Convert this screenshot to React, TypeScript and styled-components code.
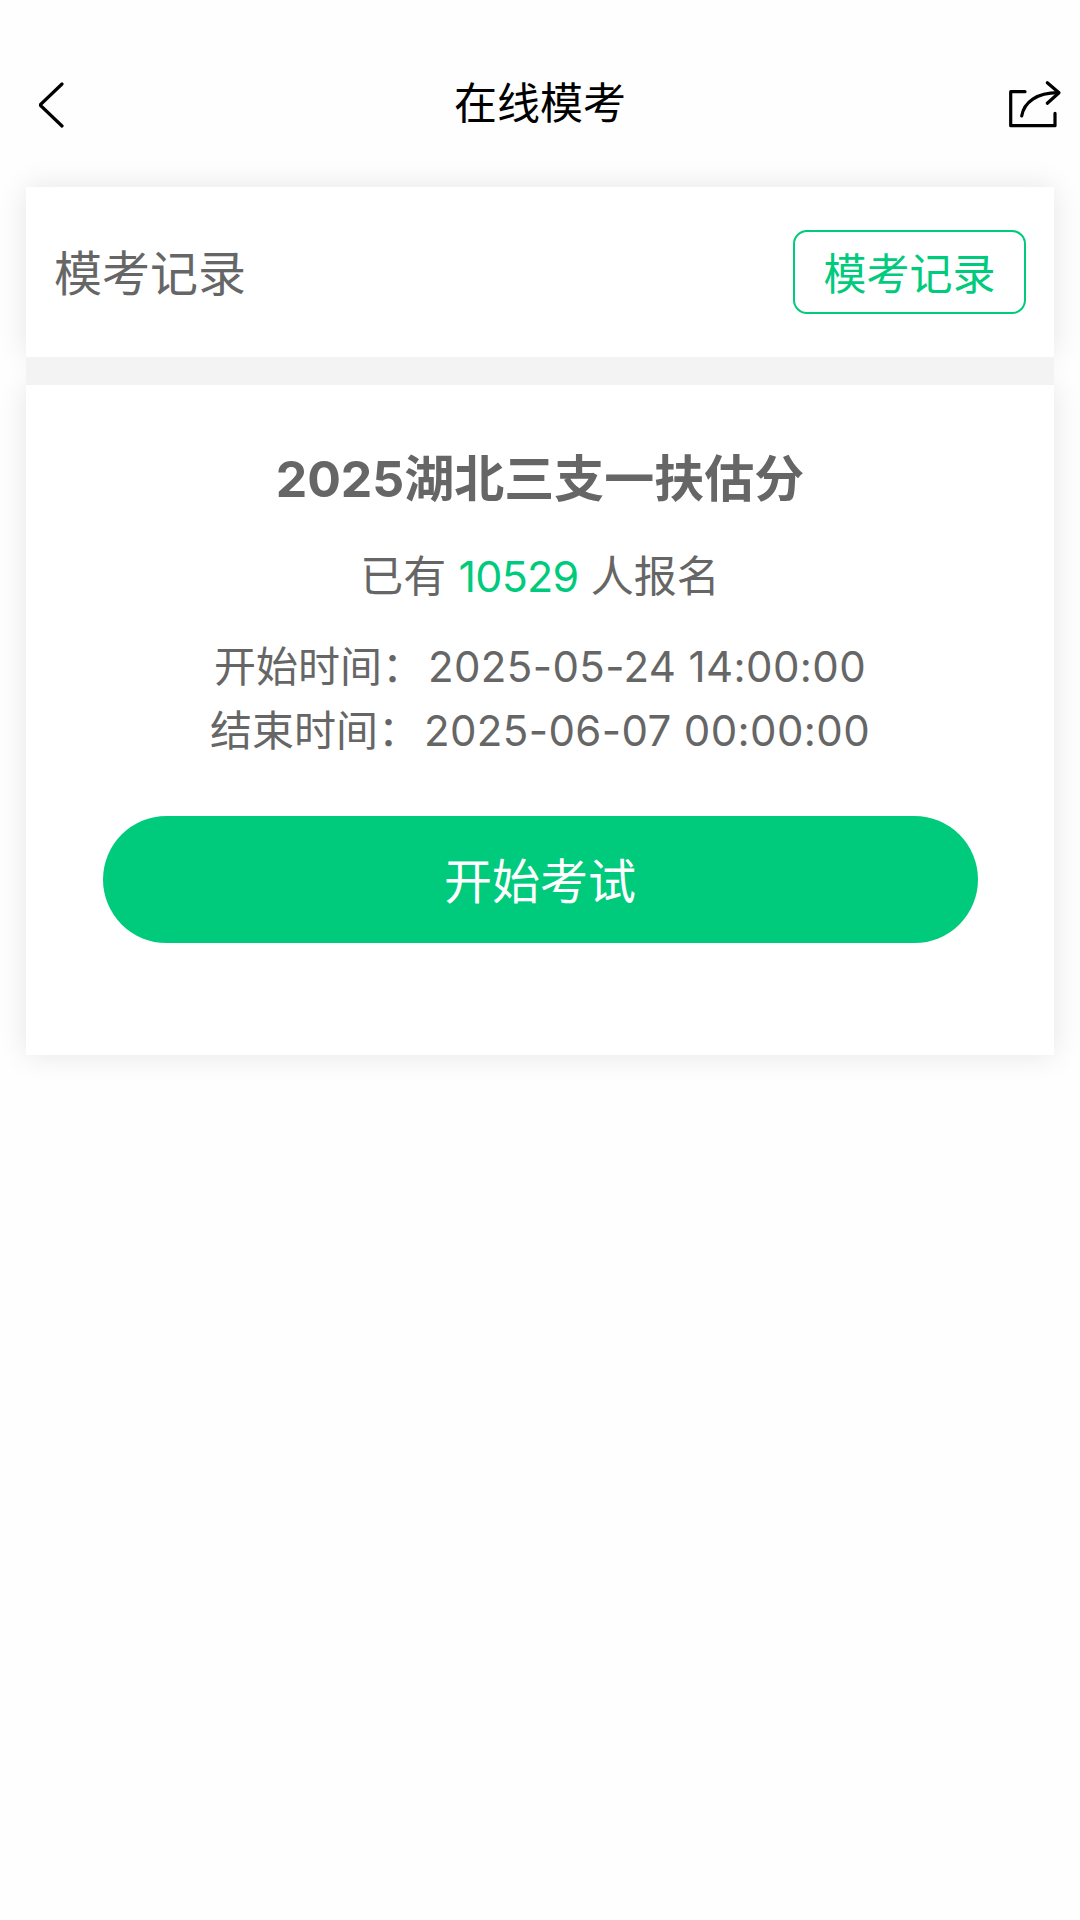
import React from 'react';
import styled, { createGlobalStyle } from 'styled-components';

const GlobalStyle = createGlobalStyle`
  html, body {
    margin: 0;
    padding: 0;
    background: #fefefe;
  }
  body {
    font-family: Inter, "Noto Sans CJK SC", sans-serif;
  }
`;

const Page = styled.div`
  width: 1080px;
  height: 1920px;
  overflow: hidden;
`;

const Header = styled.header`
  height: 187px;
  box-sizing: border-box;
  padding: 78px 15px 0;
  display: grid;
  grid-template-columns: 1fr auto 1fr;
  align-items: start;
`;

const HeaderTitle = styled.h1`
  margin: 0;
  font-size: 43px;
  font-weight: 400;
  line-height: 50px;
  color: #000;
`;

const BackButton = styled.button`
  margin-left: 24px;
  padding: 0;
  border: 0;
  background: none;
  display: block;
  justify-self: start;
`;

const ShareButton = styled.button`
  padding: 0;
  border: 0;
  background: none;
  display: block;
  justify-self: end;
`;

const Card = styled.section`
  margin: 0 26px;
  background: #fff;
  box-shadow: 0 0 28px rgba(0, 0, 0, 0.1);
`;

// sits above the two card shadows so the strip stays one flat grey
const CardGap = styled.div`
  position: relative;
  height: 28px;
  margin: 0 26px;
  background: #f3f3f3;
`;

const RecordRow = styled(Card)`
  height: 170px;
  box-sizing: border-box;
  padding: 0 28px;
  display: flex;
  align-items: center;
  justify-content: space-between;
`;

const RecordLabel = styled.div`
  margin-bottom: 4px;
  font-size: 48px;
  color: #666;
`;

const RecordButton = styled.button`
  width: 233px;
  height: 84px;
  padding: 0 0 3px;
  border: 2px solid #00cb7c;
  border-radius: 14px;
  background: #fff;
  color: #00cb7c;
  font-family: inherit;
  font-size: 43px;
`;

const ExamCard = styled(Card)`
  height: 670px;
  box-sizing: border-box;
  padding-top: 62px;
  display: flex;
  flex-direction: column;
  align-items: center;
  color: #666;
`;

const ExamTitle = styled.h2`
  margin: 0 0 35px;
  font-size: 50px;
  line-height: 64px;
  font-weight: 700;
`;

const Signup = styled.div`
  margin-bottom: 29px;
  font-size: 43px;
  line-height: 60px;
`;

const Count = styled.span`
  color: #00cb7c;
  letter-spacing: -0.7px;
`;

const TimeLine = styled.div`
  font-size: 42px;
  line-height: 64px;
  white-space: pre;
`;

const TimeValue = styled.span`
  margin-left: 4px;
  letter-spacing: 0.38px;
`;

const StartButton = styled.button`
  width: 875px;
  height: 127px;
  margin-top: 53px;
  padding: 0 0 4px;
  border: 0;
  border-radius: 64px;
  background: #00cb7c;
  color: #fff;
  font-family: inherit;
  font-size: 48px;
`;

const App = () => (
  <Page>
    <GlobalStyle />
    <Header>
      <BackButton aria-label="返回">
        <svg width="26" height="50" viewBox="0 0 26 50" fill="none" stroke="#000" strokeWidth="3.2" strokeLinecap="round" strokeLinejoin="round">
          <path d="M23 6 L1 27 L23 48" />
        </svg>
      </BackButton>
      <HeaderTitle>在线模考</HeaderTitle>
      <ShareButton aria-label="分享">
        <svg width="60" height="52" viewBox="0 0 60 52" fill="none" stroke="#000" strokeWidth="3.2" strokeLinecap="round" strokeLinejoin="round">
          <path d="M20 13.7 H5.7 V47.7 H50 V35.3" />
          <path d="M42.3 4.7 L54 14.7 L42.3 25.3" />
          <path d="M16.7 38 C19 24 32 14.7 53 14.7" />
        </svg>
      </ShareButton>
    </Header>
    <RecordRow>
      <RecordLabel>模考记录</RecordLabel>
      <RecordButton>模考记录</RecordButton>
    </RecordRow>
    <CardGap />
    <ExamCard>
      <ExamTitle>2025湖北三支一扶估分</ExamTitle>
      <Signup>
        已有 <Count>10529</Count> 人报名
      </Signup>
      <TimeLine>
        开始时间：<TimeValue>2025-05-24 14:00:00</TimeValue>
      </TimeLine>
      <TimeLine>
        结束时间：<TimeValue>2025-06-07 00:00:00</TimeValue>
      </TimeLine>
      <StartButton>开始考试</StartButton>
    </ExamCard>
  </Page>
);

export default App;
